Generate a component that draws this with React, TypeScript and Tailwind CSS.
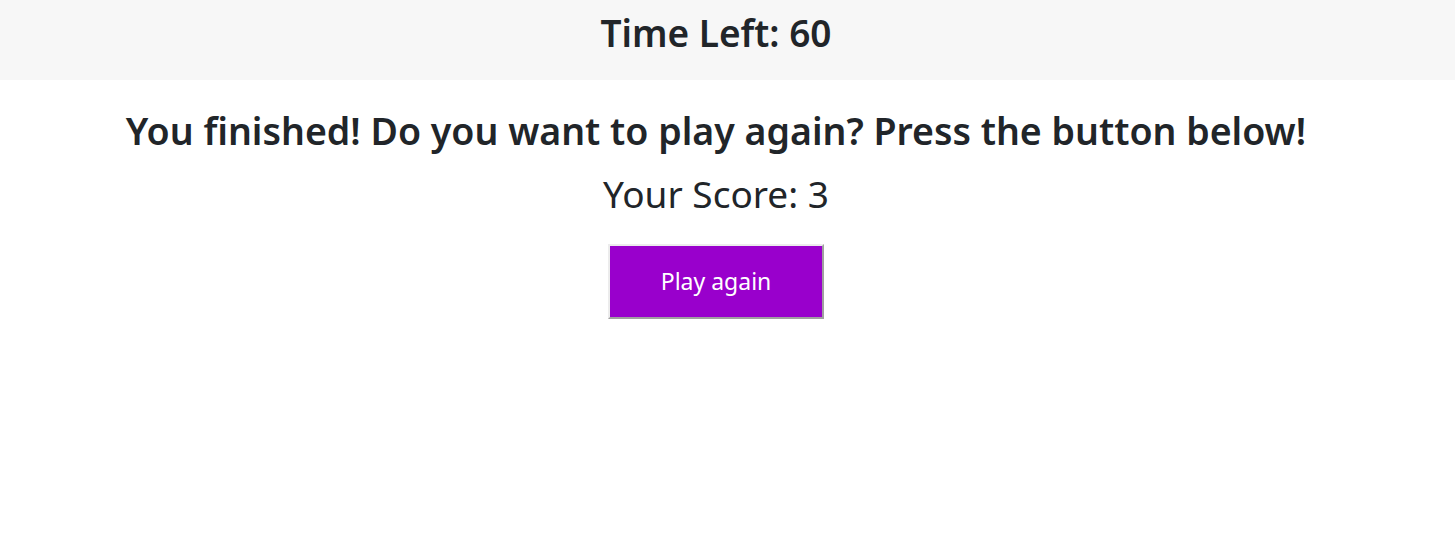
import React from "react";

const App = () => {
  return (
    <div className="min-h-[545px] bg-white font-['Noto_Sans','Open_Sans',sans-serif] text-[#212529]">
      {/* Timer bar */}
      <header className="h-[80px] bg-[#f7f7f7] flex items-center justify-center pb-[16px] pr-[23px]">
        <h1 className="text-[37px] font-semibold leading-none">Time Left: 60</h1>
      </header>

      {/* Result */}
      <main className="flex flex-col items-center pt-[27px] pr-[23px]">
        <h2 className="text-[37.5px] font-semibold leading-[48px]">
          You finished! Do you want to play again? Press the button below!
        </h2>
        <p className="text-[37px] leading-[48px] mt-[15px]">Your Score: 3</p>
        <button className="mt-[26px] w-[216px] h-[75px] bg-[#9900cc] text-white text-[23px] border-2 border-t-[#ececec] border-l-[#ececec] border-b-[#a0a0a0] border-r-[#a0a0a0]">
          Play again
        </button>
      </main>
    </div>
  );
};

export default App;
